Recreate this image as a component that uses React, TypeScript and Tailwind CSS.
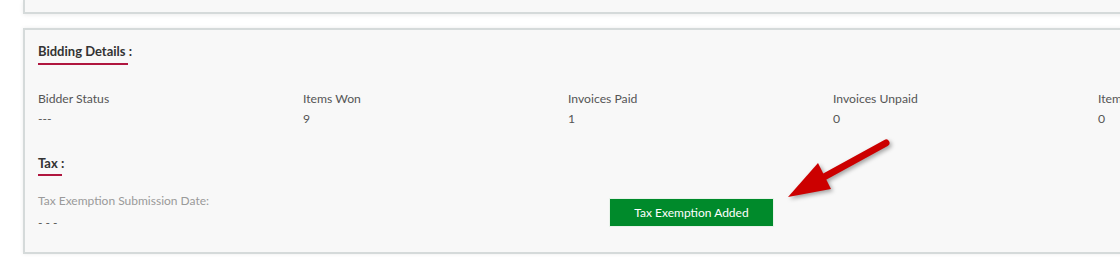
import React from "react";

const cols = [
  { label: "Bidder Status", value: "---" },
  { label: "Items Won", value: "9" },
  { label: "Invoices Paid", value: "1" },
  { label: "Invoices Unpaid", value: "0" },
  { label: "Items Unpaid", value: "0" },
];

export default function App() {
  return (
    <div
      className="relative w-[1120px] h-[270px] overflow-hidden bg-white"
      style={{ fontFamily: "Lato, 'Noto Sans', sans-serif" }}
    >
      <div className="ml-[23px] w-[1130px] h-[14px] bg-[#f8f8f8] border-x-2 border-b-2 border-[#d5dada] shadow-[0_1px_4px_rgba(0,0,0,0.08)]" />
      <div className="mt-[14px] ml-[23px] w-[1130px] h-[226px] bg-[#f8f8f8] border-2 border-[#d5dada] shadow-[0_0_4px_rgba(0,0,0,0.08)] pl-[13px] pt-[13px]">
        <div className="w-fit">
          <div className="text-[13px] leading-[16px] font-bold text-[#333]">Bidding Details :</div>
          <div className="mt-[4px] w-[90px] h-[2px] bg-[#b0163f]" />
        </div>
        <div className="mt-[26px] grid grid-cols-[repeat(5,265px)] text-[12.2px] leading-[16px] text-[#555]">
          {cols.map((c) => (
            <div key={c.label}>
              <div>{c.label}</div>
              <div className="mt-[4px]">{c.value}</div>
            </div>
          ))}
        </div>
        <div className="mt-[28px] w-fit">
          <div className="text-[13px] leading-[16px] font-bold text-[#333]">Tax :</div>
          <div className="mt-[3px] w-[24px] h-[2px] bg-[#b0163f]" />
        </div>
        <div className="mt-[17px] flex items-start">
          <div className="w-[571px] text-[12px] leading-[16px]">
            <div className="text-[#9a9a9a]">Tax Exemption Submission Date:</div>
            <div className="mt-[6px] text-[#555]">- - -</div>
          </div>
          <button className="mt-[5px] w-[165px] h-[29px] bg-[#008a2b] border border-[#e8f3ea] text-white text-[12px] flex items-center justify-center">
            Tax Exemption Added
          </button>
        </div>
      </div>
      <svg
        className="absolute left-[770px] top-[130px] drop-shadow-[2px_2px_2px_rgba(0,0,0,0.35)]"
        width="130"
        height="80"
        viewBox="0 0 130 80"
      >
        <line x1="54" y1="47" x2="116" y2="13" stroke="#cc0000" strokeWidth="7" strokeLinecap="round" />
        <polygon points="18,67 48,33 61,59" fill="#cc0000" />
      </svg>
    </div>
  );
}
